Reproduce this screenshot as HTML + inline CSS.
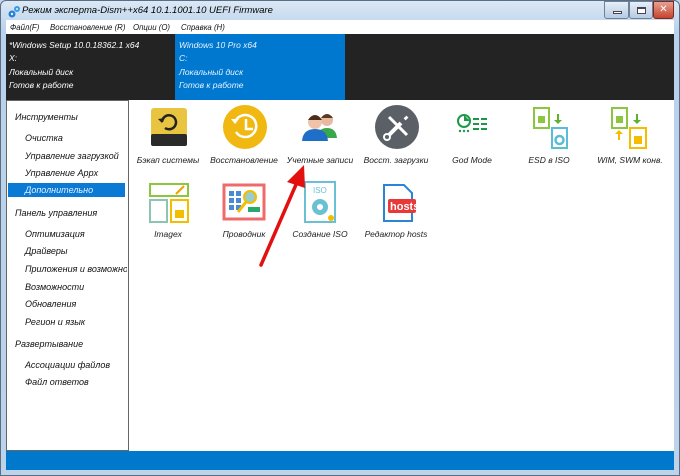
<!DOCTYPE html>
<html><head><meta charset="utf-8"><style>
*{margin:0;padding:0;box-sizing:border-box}
body{width:680px;height:476px;background:#c3d7ec;position:relative;overflow:hidden;font-family:"Liberation Sans","DejaVu Sans",sans-serif;font-style:italic;font-size:9px;color:#111}
.a{position:absolute;white-space:nowrap}
#frame{position:absolute;left:0;top:0;width:680px;height:476px;background:linear-gradient(#dce8f5,#b9d1ea 30px,#bcd3ea);border:1px solid #5a6f86;border-radius:6px 6px 0 0}
.btn{position:absolute;top:1px;height:18px;border:1px solid #6d819a;border-radius:0 0 3px 3px;background:linear-gradient(#e6eef8,#b8cbe2)}
.side{position:absolute;left:6px;top:100px;width:123px;height:351px;background:#fff;border:1px solid #666}
.lbl{position:absolute;width:76px;text-align:center;font-size:8.5px;color:#222}
.m{font-size:8.5px;transform:scaleX(0.92);transform-origin:left}
</style></head><body>
<div id="frame"></div>
<svg class="a" style="left:7px;top:5px" width="14" height="14" viewBox="0 0 14 14"><circle cx="5" cy="9" r="3.5" fill="#2a7fd4"/><circle cx="10" cy="4" r="3" fill="#3c9be8"/><circle cx="5" cy="9" r="1.2" fill="#cfe"/><circle cx="10" cy="4" r="1" fill="#cfe"/></svg>
<div class="a" style="left:22px;top:5px;font-size:9.5px;color:#000">Режим эксперта-Dism++x64 10.1.1001.10 UEFI Firmware</div>
<div class="btn" style="left:604px;width:25px"><div style="position:absolute;left:8px;top:9px;width:9px;height:3px;background:#fff;border:1px solid #445"></div></div>
<div class="btn" style="left:629px;width:24px"><div style="position:absolute;left:7px;top:5px;width:9px;height:7px;background:#fff;border:1px solid #445;border-top-width:2px"></div></div>
<div class="btn" style="left:653px;width:21px;background:linear-gradient(#e8a090,#c7432e);border-color:#7a2a20;color:#fff;font-style:normal;font-weight:bold;font-size:10px;text-align:center;line-height:15px">✕</div>
<div class="a" style="left:6px;top:20px;width:668px;height:14px;background:#fff"></div>
<div class="a m" style="left:10px;top:22px">Файл(F)</div>
<div class="a m" style="left:50px;top:22px">Восстановление (R)</div>
<div class="a m" style="left:133px;top:22px">Опции (O)</div>
<div class="a m" style="left:181px;top:22px">Справка (H)</div>
<div class="a" style="left:6px;top:34px;width:668px;height:66px;background:#232323"></div>
<div class="a" style="left:175px;top:34px;width:170px;height:66px;background:#0078d0"></div>
<div class="a" style="left:9px;top:39px;color:#fff;line-height:13.3px;font-size:8.5px">*Windows Setup 10.0.18362.1 x64<br>X:<br>Локальный диск<br>Готов к работе</div>
<div class="a" style="left:179px;top:39px;color:#e8f2ff;line-height:13.3px;font-size:8.5px">Windows 10 Pro x64<br>C:<br>Локальный диск<br>Готов к работе</div>
<div class="a" style="left:129px;top:100px;width:545px;height:351px;background:#fff"></div>
<div class="side"></div>
<div class="a" style="left:8px;top:183px;width:117px;height:14px;background:#0a7ad4"></div>
<div class="a" style="left:15px;top:112px">Инструменты</div>
<div class="a" style="left:25px;top:133px">Очистка</div>
<div class="a" style="left:25px;top:151px">Управление загрузкой</div>
<div class="a" style="left:25px;top:168px">Управление Appx</div>
<div class="a" style="left:25px;top:185px;color:#e6f0ff">Дополнительно</div>
<div class="a" style="left:15px;top:208px">Панель управления</div>
<div class="a" style="left:25px;top:229px">Оптимизация</div>
<div class="a" style="left:25px;top:246px">Драйверы</div>
<div class="a" style="left:25px;top:264px;width:102px;overflow:hidden">Приложения и возможности</div>
<div class="a" style="left:25px;top:282px">Возможности</div>
<div class="a" style="left:25px;top:299px">Обновления</div>
<div class="a" style="left:25px;top:317px">Регион и язык</div>
<div class="a" style="left:15px;top:339px">Развертывание</div>
<div class="a" style="left:25px;top:360px">Ассоциации файлов</div>
<div class="a" style="left:25px;top:377px">Файл ответов</div>
<div class="a" style="left:6px;top:451px;width:668px;height:19px;background:#0078cc"></div>

<svg class="a" style="left:148px;top:106px" width="42" height="42"><rect x="3" y="2" width="36" height="38" rx="3" fill="#e8c440"/><rect x="3" y="28" width="36" height="12" rx="2" fill="#2a2a2a"/><path d="M14 16a7 7 0 1 1 3 6" stroke="#222" stroke-width="2.5" fill="none"/><path d="M10 13l4 4 3-5z" fill="#222"/></svg>
<svg class="a" style="left:222px;top:104px" width="46" height="46"><circle cx="23" cy="23" r="22" fill="#f0b810"/><path d="M14 28a11 11 0 1 0 -1-10" stroke="#fff" stroke-width="2.5" fill="none"/><path d="M9 15l4 5 4-5z" fill="#fff"/><path d="M24 15v10h7" stroke="#fff" stroke-width="2.5" fill="none"/></svg>
<svg class="a" style="left:300px;top:108px" width="40" height="36"><circle cx="27" cy="12" r="6" fill="#e7b9a0"/><path d="M21 10q6-8 12 0" fill="#5b3a22"/><path d="M17 30q1-10 10-10t10 10z" fill="#3aa84a"/><circle cx="15" cy="14" r="7" fill="#f0c2a8"/><path d="M8 12q7-10 14 0" fill="#4a2e1a"/><path d="M2 33q1-12 13-12t13 12z" fill="#1f6fc9"/></svg>
<svg class="a" style="left:374px;top:104px" width="46" height="46"><circle cx="23" cy="23" r="22" fill="#5a6066"/><path d="M13 33l14-14M31 13l2 2" stroke="#fff" stroke-width="4"/><circle cx="13" cy="33" r="3" fill="#5a6066" stroke="#fff" stroke-width="2"/><path d="M15 13l18 18" stroke="#fff" stroke-width="3"/></svg>
<svg class="a" style="left:457px;top:112px" width="32" height="26"><circle cx="7" cy="9" r="6" fill="none" stroke="#1a9a48" stroke-width="2"/><path d="M7 3v6h6" fill="#1a9a48"/><rect x="16" y="6" width="6" height="2" fill="#1a9a48"/><rect x="24" y="6" width="6" height="2" fill="#1a9a48"/><rect x="16" y="11" width="6" height="2" fill="#1a9a48"/><rect x="24" y="11" width="6" height="2" fill="#1a9a48"/><rect x="16" y="16" width="6" height="2" fill="#1a9a48"/><rect x="24" y="16" width="6" height="2" fill="#1a9a48"/><circle cx="3" cy="19" r="1.2" fill="#1a9a48"/><circle cx="7" cy="19" r="1.2" fill="#1a9a48"/><circle cx="11" cy="19" r="1.2" fill="#1a9a48"/></svg>
<svg class="a" style="left:532px;top:106px" width="40" height="44"><rect x="2" y="2" width="15" height="20" fill="#fff" stroke="#8cc63f" stroke-width="2"/><rect x="6" y="10" width="7" height="7" fill="#8cc63f"/><path d="M25 8v6h-3l4 4 4-4h-3V8z" fill="#5ab22e"/><rect x="20" y="22" width="15" height="20" fill="#fff" stroke="#5bbcd8" stroke-width="2"/><circle cx="27.5" cy="34" r="4" fill="none" stroke="#5bbcd8" stroke-width="2.5"/></svg>
<svg class="a" style="left:610px;top:106px" width="42" height="44"><rect x="2" y="2" width="15" height="20" fill="#fff" stroke="#8cc63f" stroke-width="2"/><rect x="6" y="10" width="7" height="7" fill="#8cc63f"/><path d="M26 8v6h-3l4 4 4-4h-3V8z" fill="#5ab22e"/><path d="M8 34v-6h-3l4-4 4 4h-3v6z" fill="#f3bd00"/><rect x="20" y="22" width="16" height="20" fill="#fff" stroke="#f3bd00" stroke-width="2"/><rect x="24" y="30" width="8" height="8" fill="#f3bd00"/></svg>
<div class="lbl" style="left:130px;top:155px">Бэкап системы</div>
<div class="lbl" style="left:206px;top:155px">Восстановление</div>
<div class="lbl" style="left:282px;top:155px">Учетные записи</div>
<div class="lbl" style="left:358px;top:155px">Восст. загрузки</div>
<div class="lbl" style="left:434px;top:155px">God Mode</div>
<div class="lbl" style="left:511px;top:155px">ESD в ISO</div>
<div class="lbl" style="left:590px;top:155px;width:80px">WIM, SWM конв.</div>
<svg class="a" style="left:148px;top:182px" width="42" height="42"><rect x="2" y="2" width="38" height="12" fill="#fff" stroke="#8cc63f" stroke-width="2"/><path d="M28 12l8-8" stroke="#f3a000" stroke-width="2"/><rect x="2" y="18" width="17" height="22" fill="#fff" stroke="#8cc6b0" stroke-width="2"/><rect x="23" y="18" width="17" height="22" fill="#fff" stroke="#f3bd00" stroke-width="2"/><rect x="27" y="28" width="9" height="8" fill="#f3bd00"/></svg>
<svg class="a" style="left:222px;top:183px" width="44" height="38"><rect x="2" y="2" width="40" height="34" fill="#fff" stroke="#ef6b6b" stroke-width="3"/><rect x="7" y="8" width="5" height="5" fill="#4a8ad4"/><rect x="14" y="8" width="5" height="5" fill="#4a8ad4"/><rect x="7" y="15" width="5" height="5" fill="#4a8ad4"/><rect x="14" y="15" width="5" height="5" fill="#4a8ad4"/><rect x="7" y="22" width="5" height="5" fill="#4a8ad4"/><rect x="14" y="22" width="5" height="5" fill="#4a8ad4"/><rect x="26" y="24" width="12" height="5" fill="#2aa870"/><circle cx="28" cy="14" r="6" fill="#9cc" stroke="#f3bd00" stroke-width="2"/><path d="M24 19l-8 10" stroke="#f3bd00" stroke-width="3"/></svg>
<svg class="a" style="left:304px;top:181px" width="32" height="42"><rect x="1" y="1" width="30" height="40" fill="#fff" stroke="#6cc0d4" stroke-width="2"/><text x="9" y="12" font-size="8" fill="#6cc0d4" font-style="normal">ISO</text><circle cx="16" cy="26" r="8" fill="#6cc0d4"/><circle cx="16" cy="26" r="3" fill="#fff"/><circle cx="27" cy="37" r="3" fill="#f3bd00"/></svg>
<svg class="a" style="left:378px;top:183px" width="40" height="40"><path d="M6 2h20l8 8v28H6z" fill="#fff" stroke="#2a84d8" stroke-width="2"/><rect x="10" y="16" width="28" height="14" rx="2" fill="#e83838"/><text x="12" y="27" font-size="11" font-weight="bold" fill="#fff" font-style="normal">hosts</text></svg>
<div class="lbl" style="left:130px;top:229px">Imagex</div>
<div class="lbl" style="left:206px;top:229px">Проводник</div>
<div class="lbl" style="left:282px;top:229px">Создание ISO</div>
<div class="lbl" style="left:358px;top:229px">Редактор hosts</div>
<svg class="a" style="left:250px;top:160px" width="70" height="110"><path d="M11 105L48 20" stroke="#e31010" stroke-width="3.5" stroke-linecap="round"/><path d="M54 5L37 22L55 28z" fill="#e31010"/></svg>
</body></html>
